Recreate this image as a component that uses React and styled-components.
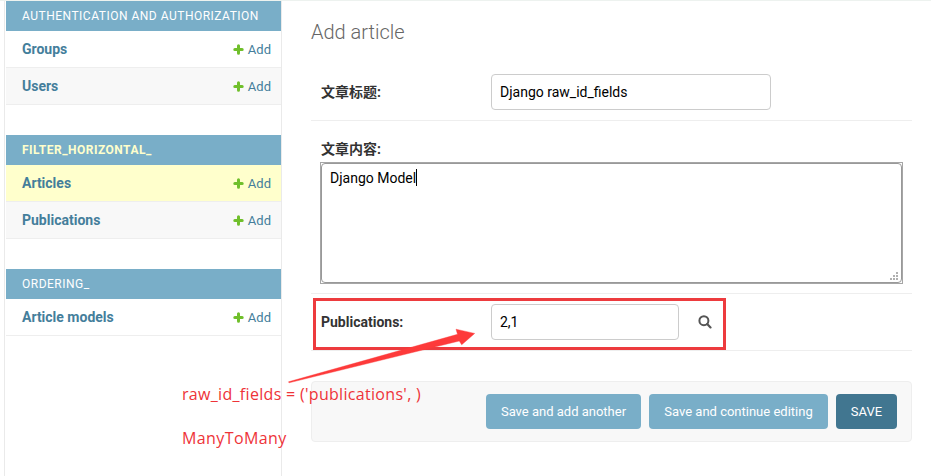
import React from "react";
import styled, { createGlobalStyle } from "styled-components";

const GlobalStyle = createGlobalStyle`
  * { box-sizing: border-box; }
  body {
    margin: 0;
    background: #fff;
    color: #333;
    font-family: Roboto, "Noto Sans CJK SC", sans-serif;
    font-size: 14px;
  }
`;

const Page = styled.div`
  position: relative;
  display: flex;
  width: 931px;
  height: 476px;
  overflow: hidden;
  border-top: 1px solid #edf2ef;
`;

const Sidebar = styled.nav`
  width: 278px;
  flex: none;
  margin-left: 4px;
  padding-left: 1px;
  border-left: 1px solid #eaeaea;
  border-right: 1px solid #eaeaea;
`;

const Module = styled.section`
  margin-bottom: 30px;
`;

const Caption = styled.h2`
  display: flex;
  align-items: center;
  height: 30px;
  margin: 0;
  padding: 0 16px;
  background: #79aec8;
  color: ${(p) => (p.$current ? "#ffffcc" : "#fff")};
  font-size: 12px;
  font-weight: ${(p) => (p.$current ? 700 : 400)};
  letter-spacing: 0.5px;
  text-transform: uppercase;
  white-space: nowrap;
`;

const ModelRow = styled.div`
  display: flex;
  align-items: center;
  justify-content: space-between;
  height: 37px;
  padding: 0 10px 0 16px;
  border-bottom: 1px solid #eee;
  background: ${(p) => (p.$current ? "#ffffcc" : p.$shaded ? "#f8f8f8" : "#fff")};
`;

const ModelLink = styled.a`
  color: #447e9b;
  font-weight: 700;
`;

const AddLink = styled.a`
  display: flex;
  align-items: center;
  gap: 4px;
  color: #447e9b;
  font-size: 13px;
`;

const Content = styled.main`
  width: 601px;
  margin-left: 29px;
  display: flex;
  flex-direction: column;
`;

const Title = styled.h1`
  margin: 19px 0 18px;
  height: 25px;
  line-height: 25px;
  font-size: 20px;
  font-weight: 300;
  color: #666;
`;

const FormRow = styled.div`
  display: flex;
  flex-direction: ${(p) => (p.$stacked ? "column" : "row")};
  align-items: ${(p) => (p.$stacked ? "flex-start" : "center")};
  height: ${(p) => p.$height}px;
  padding: ${(p) => (p.$stacked ? "18px 9px 0" : "0 10px")};
  border-bottom: 1px solid #eee;
`;

const Label = styled.label`
  width: 170px;
  padding-left: ${(p) => (p.$stacked ? 1 : 0)}px;
  line-height: 20px;
  font-weight: 700;
`;

const TextInput = styled.div`
  display: flex;
  align-items: center;
  width: ${(p) => p.$width}px;
  height: 36px;
  padding: 0 8px;
  border: 1px solid #ccc;
  border-radius: 4px;
  color: #000;
`;

const TextAreaFrame = styled.div`
  width: 583px;
  height: 122px;
  margin-top: 3px;
  border: 1px solid #a6a6a6;
`;

const TextArea = styled.div`
  position: relative;
  display: flex;
  align-items: flex-start;
  height: 100%;
  padding: 5px 8px;
  border: 1px solid #999;
  border-radius: 4px;
  color: #000;
  line-height: 18px;
`;

const Caret = styled.span`
  width: 1px;
  height: 17px;
  background: #000;
`;

const Grip = styled.svg`
  position: absolute;
  right: 3px;
  bottom: 2px;
`;

const Lookup = styled.svg`
  margin-left: 19px;
`;

const SubmitRow = styled.div`
  display: flex;
  align-items: center;
  justify-content: flex-end;
  gap: 8px;
  height: 61px;
  margin-top: 30px;
  padding: 0 14px;
  border: 1px solid #eee;
  border-radius: 4px;
  background: #f8f8f8;
`;

const Button = styled.button`
  width: ${(p) => p.$width}px;
  height: 35px;
  padding: 0;
  border: 0;
  border-radius: 4px;
  background: ${(p) => (p.$primary ? "#417690" : "#79aec8")};
  color: #fff;
  font: 400 13px Roboto, sans-serif;
  white-space: nowrap;
`;

const Highlight = styled.div`
  position: absolute;
  left: 313px;
  top: 297px;
  width: 413px;
  height: 52px;
  border: 3px solid #ed3b3e;
`;

const Arrow = styled.svg`
  position: absolute;
  left: 286px;
  top: 325px;
`;

const Note = styled.div`
  position: absolute;
  left: 182px;
  top: ${(p) => p.$top}px;
  color: #ee3338;
  font-family: "Open Sans", "Noto Sans", sans-serif;
  font-size: 16px;
  line-height: 22px;
  letter-spacing: ${(p) => p.$spacing}px;
  white-space: nowrap;
`;

const modules = [
  { name: "Authentication and Authorization", models: ["Groups", "Users"] },
  { name: "Filter_horizontal_", current: "Articles", models: ["Articles", "Publications"] },
  { name: "Ordering_", models: ["Article models"] },
];

function PlusIcon() {
  return (
    <svg width="11" height="11" viewBox="0 0 11 11">
      <path d="M5.5 1.8v7.4M1.8 5.5h7.4" stroke="#70bf2b" strokeWidth="3" strokeLinecap="round" />
    </svg>
  );
}

function SearchIcon() {
  return (
    <Lookup width="14" height="14" viewBox="0 0 14 14" fill="none" stroke="#555">
      <circle cx="5.9" cy="5.7" r="4.5" strokeWidth="2" />
      <path d="M9.2 9l3.3 3.4" strokeWidth="2.2" strokeLinecap="round" />
    </Lookup>
  );
}

export default function App() {
  return (
    <>
      <GlobalStyle />
      <Page>
        <Sidebar>
          {modules.map((m) => (
            <Module key={m.name}>
              <Caption $current={!!m.current}>{m.name}</Caption>
              {m.models.map((model, i) => (
                <ModelRow key={model} $current={m.current === model} $shaded={i % 2 === 1}>
                  <ModelLink>{model}</ModelLink>
                  <AddLink>
                    <PlusIcon />
                    Add
                  </AddLink>
                </ModelRow>
              ))}
            </Module>
          ))}
        </Sidebar>
        <Content>
          <Title>Add article</Title>
          <FormRow $height={58}>
            <Label>文章标题:</Label>
            <TextInput $width={280}>Django raw_id_fields</TextInput>
          </FormRow>
          <FormRow $height={173} $stacked>
            <Label $stacked>文章内容:</Label>
            <TextAreaFrame>
              <TextArea>
                Django Model
                <Caret />
                <Grip width="8" height="8" viewBox="0 0 8 8" fill="#b0b0b0">
                  <path d="M6 0h2v2h-2zM3 3h2v2h-2zM6 3h2v2h-2zM0 6h2v2h-2zM3 6h2v2h-2zM6 6h2v2h-2z" />
                </Grip>
              </TextArea>
            </TextAreaFrame>
          </FormRow>
          <FormRow $height={57}>
            <Label>Publications:</Label>
            <TextInput $width={188}>2,1</TextInput>
            <SearchIcon />
          </FormRow>
          <SubmitRow>
            <Button $width={155}>Save and add another</Button>
            <Button $width={179}>Save and continue editing</Button>
            <Button $width={61} $primary>SAVE</Button>
          </SubmitRow>
        </Content>
        <Highlight />
        <Arrow width="190" height="60" viewBox="286 326 190 60">
          <path d="M288.5 381.8L457.5 334.3L456 329.2L474.7 333.4L461.7 344.8L459.3 341L289 382.8Z" fill="#fd3a3a" stroke="#fd3a3a" strokeWidth="0.4" />
        </Arrow>
        <Note $top={382} $spacing={0.31}>raw_id_fields = ('publications', )</Note>
        <Note $top={426} $spacing={0.4}>ManyToMany</Note>
      </Page>
    </>
  );
}
